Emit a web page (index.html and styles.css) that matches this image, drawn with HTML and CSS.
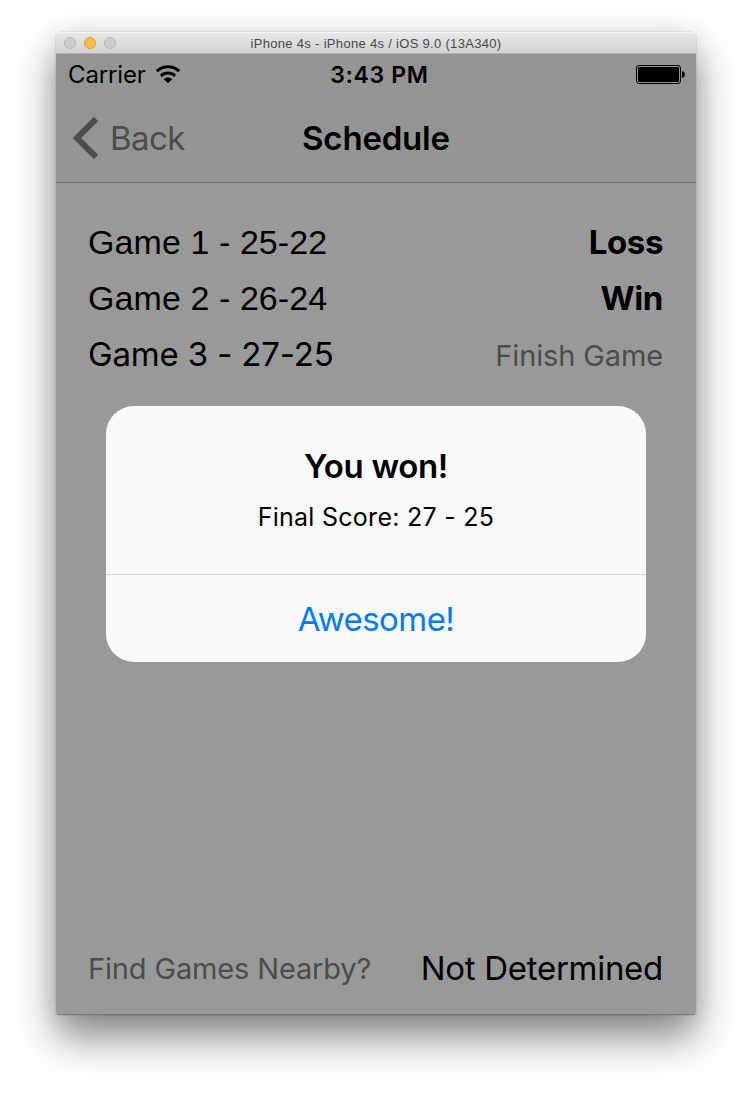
FILE: index.html
```
<!DOCTYPE html>
<html lang="en">
<head>
<meta charset="utf-8">
<title>iPhone 4s</title>
<link rel="stylesheet" href="styles.css">
</head>
<body>
<main class="window">
  <header class="titlebar">
    <div class="lights"><i class="light"></i><i class="light light-minimize"></i><i class="light"></i></div>
    <span class="window-title">iPhone 4s - iPhone 4s / iOS 9.0 (13A340)</span>
  </header>
  <section class="screen">
    <div class="top">
      <div class="status">
        <div class="carrier"><span class="carrier-name">Carrier</span>
          <svg class="wifi" width="26" height="19" viewBox="0 0 26 19"><path d="M1.8 6.3C8 .2 18 .2 24.2 6.3" fill="none" stroke="#000" stroke-width="3"/><path d="M5.9 10.8C10 7 16 7 20.1 10.8" fill="none" stroke="#000" stroke-width="3"/><path d="M8.8 14C11.3 11.9 14.7 11.9 17.2 14L13 18.2Z"/></svg>
        </div>
        <span class="time">3:43 PM</span>
        <svg class="battery" width="50" height="19" viewBox="0 0 50 19"><rect x=".5" y=".5" width="44" height="18" rx="2.5" fill="none" stroke="#000"/><rect x="2" y="2" width="41" height="15" rx="1.2"/><path d="M46 6.2C49.8 6.2 49.8 12.8 46 12.8Z"/></svg>
      </div>
      <nav class="nav">
        <div class="back"><svg width="26" height="42" viewBox="0 0 26 42"><path d="M24 2L5 21L24 40" fill="none" stroke="#4c4c4c" stroke-width="6"/></svg><span class="back-label">Back</span></div>
        <h1 class="nav-title">Schedule</h1>
      </nav>
    </div>
    <div class="games">
      <div class="row"><span class="game">Game 1 - 25-22</span><span class="result loss">Loss</span></div>
      <div class="row"><span class="game">Game 2 - 26-24</span><span class="result win">Win</span></div>
      <div class="row"><span class="game current">Game 3 - 27-25</span><span class="action finish">Finish Game</span></div>
    </div>
    <div class="alert">
      <div class="alert-body"><h2 class="alert-title">You won!</h2><p class="alert-text">Final Score: 27 - 25</p></div>
      <div class="alert-button"><span class="alert-label">Awesome!</span></div>
    </div>
    <footer class="footer"><span class="action nearby">Find Games Nearby?</span><span class="determined">Not Determined</span></footer>
  </section>
</main>
</body>
</html>
```
FILE: styles.css
```
* { box-sizing: border-box; }
body { margin: 0; padding: 32px 56px 0; height: 1094px; overflow: hidden; background: #fff; font-family: Inter, "Liberation Sans", sans-serif; color: #000; }
h1, h2, p { margin: 0; font-weight: normal; }
span, h1, h2, p { white-space: nowrap; }
.window { width: 640px; height: 983px; border-radius: 5px 5px 3px 3px; box-shadow: 0 0 0 1px rgba(0,0,0,.06), 0 22px 40px rgba(0,0,0,.48), 0 0 24px rgba(0,0,0,.08); }
.titlebar { height: 22px; display: grid; grid-template-columns: 1fr auto 1fr; align-items: center; padding: 0 8px; background: linear-gradient(#e9e6e9, #d2d1d2); border-top: 1px solid #f5f5f5; border-bottom: 1px solid #b1b1b1; border-radius: 5px 5px 0 0; }
.lights { display: flex; gap: 8px; }
.light { width: 12px; height: 12px; border-radius: 50%; background: #cecdce; border: 1px solid #b8b6b8; }
.light-minimize { background: #fdbc40; border-color: #df9f34; }
.window-title { font: 13px/16px "Liberation Sans", sans-serif; letter-spacing: .31px; color: #4a484a; padding-top: 2px; }
.screen { height: 961px; background: #999; border-bottom: 1px solid #777; border-radius: 0 0 3px 3px; display: flex; flex-direction: column; }
.top { height: 129px; background: #949494; border-bottom: 1px solid #6d6d6d; }
.status { height: 40px; display: grid; grid-template-columns: 1fr auto 1fr; align-items: center; padding: 1px 10px 0 12px; }
.carrier { display: flex; align-items: center; gap: 9.6px; }
.carrier-name { font-size: 24px; letter-spacing: -.15px; }
.time { font-size: 23px; font-weight: 600; letter-spacing: .65px; padding-left: 5px; }
.battery { justify-self: end; }
.nav { height: 88px; display: grid; grid-template-columns: 1fr auto 1fr; align-items: center; padding: 0 16px; }
.back { display: flex; align-items: center; gap: 12px; color: #4c4c4c; }
.back-label { font-size: 33px; letter-spacing: -.6px; }
.nav-title { font-size: 33px; font-weight: 600; letter-spacing: -.2px; }
.games { padding: 31px 33px 0 32px; }
.row { height: 56px; display: flex; align-items: center; justify-content: space-between; }
.game { font: 34px/40px "Liberation Sans", sans-serif; letter-spacing: .08px; }
.game.current { font: 33px/40px Inter, sans-serif; letter-spacing: -.15px; }
.result { font-size: 33px; font-weight: 700; letter-spacing: -.4px; }
.action { font-size: 29px; color: #4c4c4c; }
.finish { margin-top: 2px; letter-spacing: -.13px; }
.nearby { margin-top: 1px; letter-spacing: -.15px; }
.alert { margin: 24px 50px 0; height: 256px; border-radius: 28px; background: #f9f9f9; text-align: center; }
.alert-body { height: 169px; padding-top: 40px; border-bottom: 1px solid #d6d6d8; }
.alert-title { font-size: 33px; line-height: 41px; font-weight: 600; letter-spacing: -.35px; }
.alert-text { font-size: 25px; line-height: 32px; margin-top: 14px; letter-spacing: .27px; }
.alert-button { height: 87px; display: flex; align-items: center; justify-content: center; color: #007aff; }
.alert-label { font-size: 33px; letter-spacing: -.55px; }
.footer { margin-top: auto; height: 92px; padding: 0 33px 0 32px; display: flex; align-items: center; justify-content: space-between; }
.determined { font-size: 33px; letter-spacing: -.28px; }
```
